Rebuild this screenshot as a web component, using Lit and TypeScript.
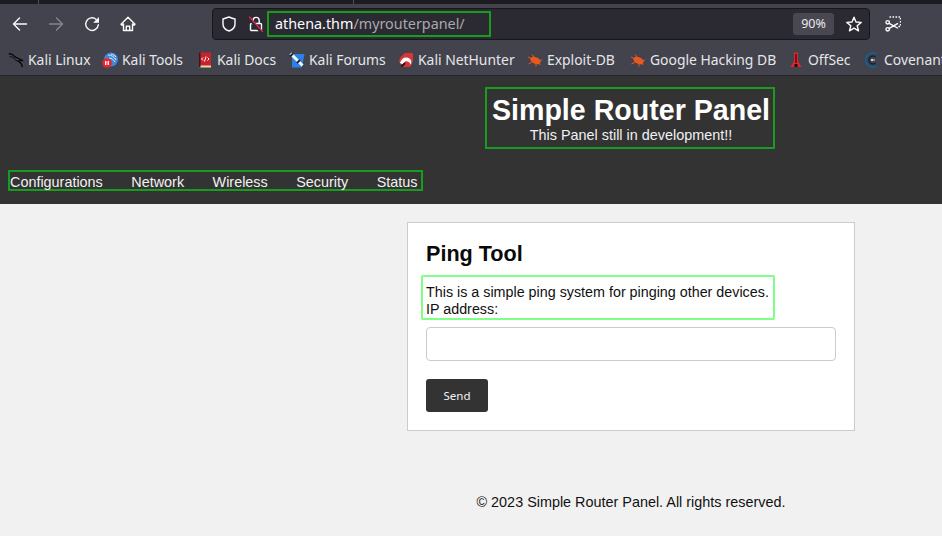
import { LitElement, html, css, svg } from "lit";
import { customElement } from "lit/decorators.js";

const bug = svg`<ellipse cx="8.500" cy="8.500" rx="5.500" ry="3.200" fill="#e8591f" transform="rotate(25 8.500 8.500)"/><path d="M1 5l4 2M1.500 12l3.500-2M5 2.500l2.500 3M9 14.500l0-3M13 13l-1.500-2.500M15 8l-2 .5" stroke="#e8591f" fill="none"/>`;

const bookmarks: [string, number, any][] = [
  ["Kali Linux", 94, svg`<path d="M.8 1.800C3.500 1.500 5 2.500 6.300 4.300c1.400 1.600 3.700 1.300 5.700 2.900 1 .8 2 1.300 3.200 1.300-1.800 0-3.900-.5-4.800.5 1.500 1 3.500 2.800 4 6" stroke="#09090b" stroke-width="1.400" fill="none"/><path d="M1.500 5c1.500-.4 2.800-.2 3.800.8 1.500 1.700 3 3 5 3.700" stroke="#09090b" stroke-width="1" fill="none"/>`],
  ["Kali Tools", 95, svg`<circle cx="9" cy="7.500" r="7" fill="#3f86dc"/><path d="M6 3c3.500 0 6.500 2 8 5M7 6c2.500 0 4.500 1.500 6 4M9 2c2 .5 4 1.500 5 3" stroke="#dbe9fa" fill="none"/><circle cx="5" cy="11" r="4.800" fill="#e5262c"/><path d="M3.500 9v4M5 9v4M6.500 9v4" stroke="#fff" stroke-width=".9"/>`],
  ["Kali Docs", 92, svg`<rect x="2" y="0.500" width="12" height="14" fill="#c9222a"/><rect x="2" y="13.500" width="12" height="2" fill="#e8d9a8"/><rect x="2" y="0.500" width="1.500" height="15" fill="#3a1420"/><path d="M6 5.500 4.500 7 6 8.500M10.500 5.500 12 7l-1.500 1.500M9 4.500l-1.500 5" stroke="#fff" fill="none"/>`],
  ["Kali Forums", 109, svg`<path d="M3 2h12.500L13 15.500H3z" fill="#2f80e4"/><path d="M1.500 1.500l12 12" stroke="#f3f6fa" stroke-width="3"/><path d="M1 4.500l3-3M8 11l3-3" stroke="#1a2230" stroke-width="1.800"/>`],
  ["Kali NetHunter", 129, svg`<path d="M2 5.500 7 1h8v8l-3 6H5L1 10z" fill="#d8353a"/><path d="M2 11c1.500-5 6-7 10-4 1.500 1.200 1.500 3.500 1 6-1-3-4-4.500-6-3.500l-2 3z" fill="#fff"/><path d="M3.500 14.500l3.500-3.500" stroke="#1b1b1f" stroke-width="2"/>`],
  ["Exploit-DB", 103, bug],
  ["Google Hacking DB", 158, bug],
  ["OffSec", 76, svg`<path d="M6 .5h4v8.500l3.500 6H2.500L6 9z" fill="#dd272c"/><path d="M7.400 2h1.200v9H7.400z" fill="#2a070a"/><path d="M6.500 12h3v3h-3z" fill="#2a070a"/>`],
  ["Covenant", 80, svg`<path d="M12.500 2A7 7 0 1 0 12.500 14" stroke="#1d5a88" stroke-width="2.200" fill="none"/><path d="M11.500 5a4 4 0 1 0 0 6" stroke="#1a2530" stroke-width="1.600" fill="none"/><path d="M8 8h3" stroke="#c8d3da"/><circle cx="8" cy="8" r="1.200" fill="#c8d3da"/>`],
];

@customElement("app-root")
export class AppRoot extends LitElement {
  static styles = css`
    :host { display: block; width: 942px; height: 536px; overflow: hidden; background: #f1f1f1; font-family: "Liberation Sans", Arial, sans-serif; }
    .tabs { height: 4px; background: #1c1b22; display: flex; }
    .tab-sep { width: 1px; background: #4f5058; }
    .tab-a { width: 38px; } .tab-b { width: 314px; }
    .toolbar { height: 40px; background: #42434d; box-sizing: border-box; padding: 4px 0 0 6px; display: flex; align-items: flex-start; }
    .nav-ic { width: 28px; height: 32px; margin-right: 8px; display: flex; align-items: center; justify-content: center; }
    .nav-ic svg, .u-ic { display: block; fill: none; stroke: #fbfbfe; stroke-width: 1.400; stroke-linecap: round; stroke-linejoin: round; flex: none; }
    .nav-ic.off svg { stroke: #85868d; }
    .fill { fill: #fbfbfe; stroke: none; }
    .urlbar { width: 658px; height: 32px; box-sizing: border-box; margin-left: 62px; background: #2b2a33; border: 1px solid #17161c; border-radius: 4px; display: flex; align-items: center; padding: 0 0 0 8px; font-family: "Noto Sans", sans-serif; color: #fbfbfe; }
    .lock { margin-left: 12px; }
    .addr { margin-left: 4px; width: 224px; height: 26px; box-sizing: border-box; border: 2px solid #179c1d; padding-left: 6px; font-size: 14.350px; line-height: 21px; white-space: nowrap; }
    .addr span { color: #a9a9ad; }
    .spacer { flex: 1; }
    .zoom { width: 41px; height: 22px; background: #494852; border-radius: 3px; font-size: 12.500px; line-height: 22px; text-align: center; color: #e8e8ec; }
    .star { margin: 0 7px 0 12px; }
    .shot { margin: 8px 0 0 15px; }
    .bm { height: 32px; box-sizing: border-box; border-bottom: 1px solid #26252c; background: #42434d; display: flex; align-items: center; overflow: hidden; padding-left: 8px; white-space: nowrap; font-family: "Noto Sans", sans-serif; font-size: 13.900px; color: #e6e6ea; }
    .bm-item { display: flex; align-items: center; gap: 4px; flex: none; }
    .bm-item svg { width: 16px; height: 16px; flex: none; }
    .page-head { height: 128px; background: #333; color: #fff; box-sizing: border-box; padding: 11px 0 0 8px; display: flex; flex-direction: column; }
    .title-wrap { display: flex; justify-content: center; padding-left: 310px; }
    .title-box { border: 2px solid #179c1d; padding: 4px 3px 4px 5px; text-align: center; }
    h1 { margin: 0; font-size: 28.600px; line-height: 34px; font-weight: 700; white-space: nowrap; }
    .title-box p { margin: 0; font-size: 14.400px; line-height: 16px; color: #f1f1f1; }
    .menu { margin-top: 21px; align-self: flex-start; border: 2px solid #179c1d; display: flex; gap: 28.500px; height: 21px; box-sizing: border-box; padding: 0 3px 0 0; font-size: 14.400px; line-height: 20px; color: #f1f1f1; }
    main { padding: 18px 0 0 320px; display: flex; flex-direction: column; align-items: center; }
    .card { width: 448px; height: 209px; box-sizing: border-box; background: #fff; border: 1px solid #ccc; padding: 18px; color: #000; }
    h2 { margin: 0; font-size: 21.600px; line-height: 26px; font-weight: 700; color: #0a0a0a; }
    .hl { margin: 8px 0 0 -5px; width: 354px; height: 45px; box-sizing: border-box; border: 2px solid #80ff86; border-radius: 2px; padding: 7px 0 0 3px; font-size: 14.320px; line-height: 17px; color: #111; white-space: nowrap; }
    .input { margin-top: 7px; height: 34px; box-sizing: border-box; border: 1px solid #ccc; border-radius: 4px; }
    .send { margin-top: 18px; width: 62px; height: 33px; background: #333; border-radius: 3px; display: flex; align-items: center; justify-content: center; color: #f1f1f1; font-family: "Noto Sans", sans-serif; font-size: 11.500px; }
    footer { margin-top: 63px; font-size: 14.400px; line-height: 17px; color: #111; }
  `;

  render() {
    return html`
      <div class="tabs"><div class="tab-a"></div><div class="tab-sep"></div><div class="tab-b"></div><div class="tab-sep"></div></div>
      <div class="toolbar">
        <div class="nav-ic"><svg width="16" height="16" viewBox="0 0 16 16"><path d="M14.500 8H1.500M7.500 2 1.500 8l6 6"/></svg></div>
        <div class="nav-ic off"><svg width="16" height="16" viewBox="0 0 16 16"><path d="M1.500 8h13M8.500 2l6 6-6 6"/></svg></div>
        <div class="nav-ic"><svg width="16" height="16" viewBox="0 0 16 16"><path d="M14.300 8.800A6.300 6.300 0 1 1 12 3.200"/><path class="fill" d="M15 1v5.800H9.200z"/></svg></div>
        <div class="nav-ic"><svg width="16" height="16" viewBox="0 0 16 16"><path d="M8 1.300 1 8.200l1 1 1.500-1.200v6.500h9V8l1.500 1.200 1-1zM6.300 14.500V10.300h3.400v4.200"/></svg></div>
        <div class="urlbar">
          <svg class="u-ic" width="16" height="16" viewBox="0 0 16 16"><path d="M8 1 2 3v5c0 3.500 3 6 6 7 3-1 6-3.500 6-7V3C12 2.500 10 1.800 8 1z"/></svg>
          <svg class="u-ic lock" width="14" height="16" viewBox="0 0 14 16"><path d="M4 7V4.500a3.100 3.100 0 0 1 6.200 0V7"/><rect x="1.500" y="7.500" width="11" height="7" rx="1"/><path d="M0 2.200 11.800 15.500" stroke="#2b2a33" stroke-width="3"/><path d="M.5 1 13.500 15.500" stroke="#e22850"/></svg>
          <div class="addr">athena.thm<span>/myrouterpanel/</span></div>
          <div class="spacer"></div>
          <div class="zoom">90%</div>
          <svg class="u-ic star" width="16" height="16" viewBox="0 0 16 16"><path d="M8 1.200 10 6l5.200.4-4 3.400 1.300 5L8 12.200 3.500 14.800l1.300-5-4-3.400L6 6z"/></svg>
        </div>
        <svg class="u-ic shot" width="16" height="16" viewBox="0 0 16 16"><path d="M4.500 1H15.500V10.500H12.500" stroke-dasharray="1.600 1.400" stroke-linecap="butt"/><circle cx="2.700" cy="6.300" r="1.700"/><circle cx="2.700" cy="13.300" r="1.700"/><path d="M4.200 7.300 12.500 12M4.200 12.300 12.500 7.600"/></svg>
      </div>
      <div class="bm">
        ${bookmarks.map(([n, w, i]) => html`<div class="bm-item" style="width:${w}px"><svg viewBox="0 0 16 16">${i}</svg>${n}</div>`)}
      </div>
      <header class="page-head">
        <div class="title-wrap"><div class="title-box"><h1>Simple Router Panel</h1><p>This Panel still in development!!</p></div></div>
        <nav class="menu"><span>Configurations</span><span>Network</span><span>Wireless</span><span>Security</span><span>Status</span></nav>
      </header>
      <main>
        <section class="card">
          <h2>Ping Tool</h2>
          <div class="hl">This is a simple ping system for pinging other devices.<br />IP address:</div>
          <div class="input"></div>
          <div class="send">Send</div>
        </section>
        <footer>© 2023 Simple Router Panel. All rights reserved.</footer>
      </main>
    `;
  }
}
